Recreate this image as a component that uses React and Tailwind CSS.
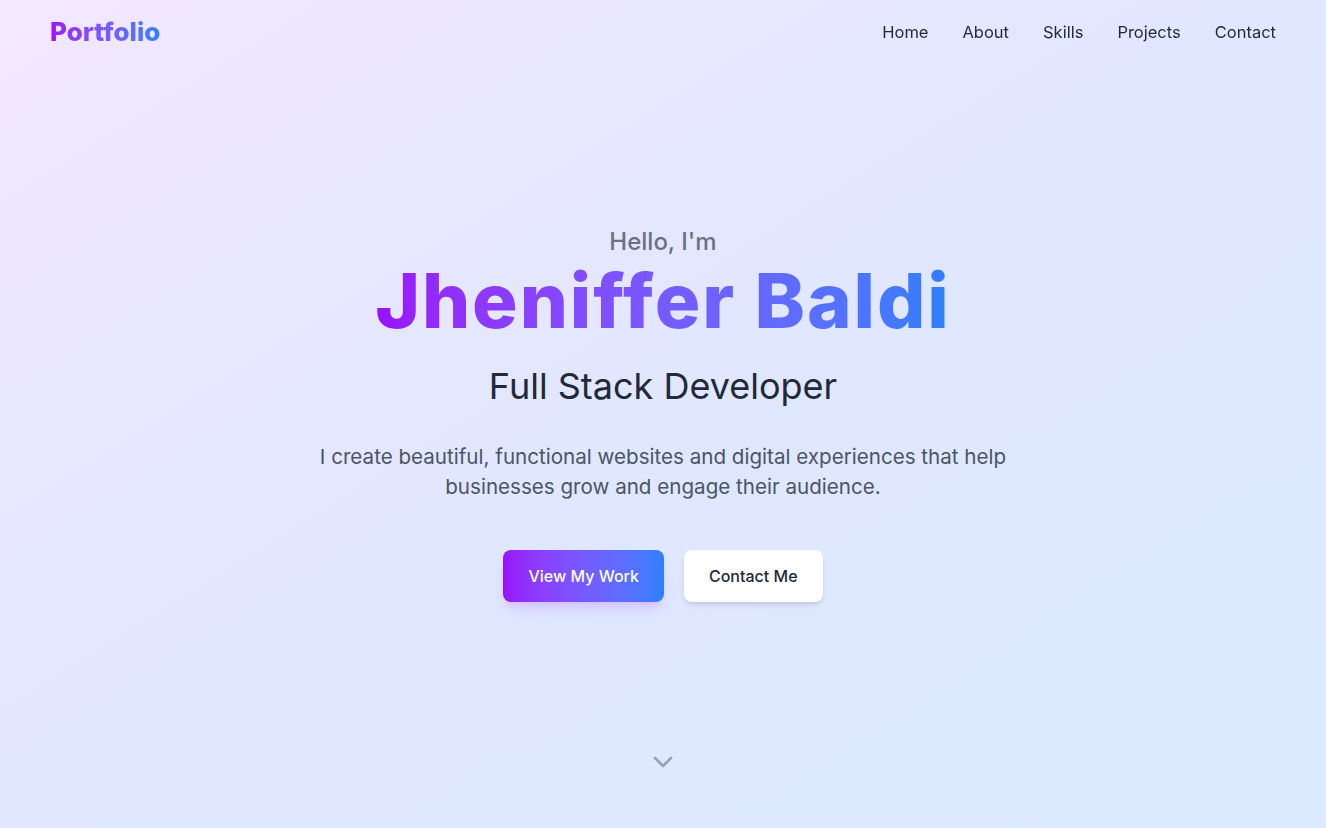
import { ChevronDown } from "lucide-react";

const links = ["Home", "About", "Skills", "Projects", "Contact"];

export default function App() {
  return (
    <div
      className="relative min-h-screen bg-gradient-to-br from-purple-100 via-indigo-100 to-blue-100 text-gray-800"
      style={{ fontFamily: "Inter, 'Noto Sans', sans-serif" }}
    >
      {/* Nav */}
      <header className="fixed top-0 inset-x-0 z-10">
        <nav className="flex items-center justify-between px-[50px] py-4">
          <a href="#" className="text-[26px] leading-8 font-extrabold bg-gradient-to-r from-purple-600 to-blue-500 bg-clip-text text-transparent">
            Portfolio
          </a>
          <ul className="flex items-center gap-[34px] text-[16.5px] text-gray-800">
            {links.map((l) => (
              <li key={l}>
                <a href={`#${l.toLowerCase()}`} className="hover:text-purple-600">
                  {l}
                </a>
              </li>
            ))}
          </ul>
        </nav>
      </header>

      {/* Hero */}
      <section className="relative min-h-screen flex items-center justify-center px-6">
        <div className="flex flex-col items-center text-center">
          <p className="text-2xl font-medium text-gray-500">Hello, I'm</p>
          <h1 className="mt-1 text-[76px] leading-none font-extrabold tracking-wide bg-gradient-to-r from-purple-600 to-blue-500 bg-clip-text text-transparent">
            Jheniffer Baldi
          </h1>
          <h2 className="mt-7 text-4xl text-gray-800">Full Stack Developer</h2>
          <p className="mt-9 max-w-3xl text-[20.6px] leading-[30px] text-gray-600">
            I create beautiful, functional websites and digital experiences that help businesses grow and engage their audience.
          </p>
          <div className="mt-12 flex gap-5">
            <a
              href="#projects"
              className="px-[25px] py-3.5 rounded-lg bg-gradient-to-r from-purple-600 to-blue-500 text-white font-medium shadow-lg shadow-purple-500/20"
            >
              View My Work
            </a>
            <a
              href="#contact"
              className="px-[25px] py-3.5 rounded-lg bg-white text-gray-800 font-medium shadow-md"
            >
              Contact Me
            </a>
          </div>
        </div>
        <div className="absolute bottom-[50px] left-1/2 -translate-x-1/2 text-gray-400">
          <ChevronDown className="w-8 h-8" />
        </div>
      </section>
    </div>
  );
}
